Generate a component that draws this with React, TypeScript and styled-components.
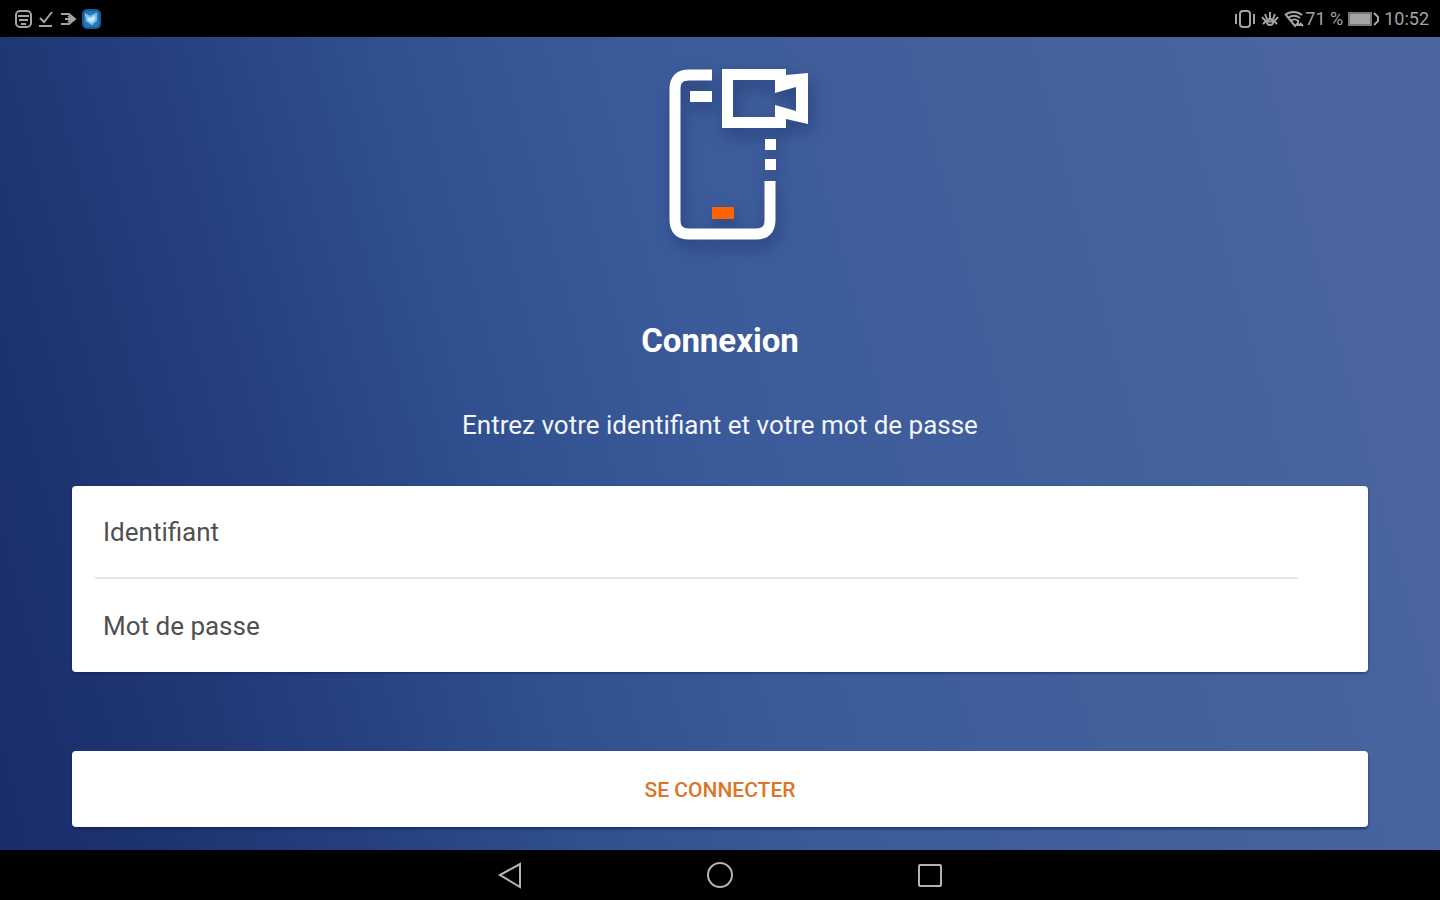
import React from 'react';
import styled, { createGlobalStyle } from 'styled-components';

const GlobalStyle = createGlobalStyle`
  *, *::before, *::after { box-sizing: border-box; }
  body { margin: 0; background: #000; font-family: Roboto, "Liberation Sans", sans-serif; }
`;

const Screen = styled.div`
  display: flex;
  flex-direction: column;
  min-height: 100vh;
`;

const StatusBar = styled.header`
  display: flex;
  justify-content: space-between;
  align-items: center;
  height: 37px;
  padding: 0 11px 0 14px;
  background: #000;
  color: #a4a4a4;
  font-size: 18px;
  line-height: 20px;
`;

const StatusGroup = styled.div<{ $gap: number }>`
  display: flex;
  align-items: center;
  gap: ${({ $gap }) => $gap}px;
`;

const StatusIcon = styled.svg`
  display: block;
  fill: none;
  stroke: #a4a4a4;
  stroke-width: 2;
`;

const Content = styled.main`
  display: flex;
  flex: 1;
  flex-direction: column;
  align-items: center;
  padding: 28px 5% 23px;
  background: linear-gradient(75deg, #192d69 0%, #1c316f 7%, #253e7d 21%, #2f4f8f 35%, #3a5a9a 50%, #405e9b 64%, #44629c 79%, #4b659f 93%);
`;

const Logo = styled.svg`
  display: block;
  overflow: visible;
  filter: drop-shadow(3px 8px 8px rgba(20, 40, 90, 0.45));
`;

const Title = styled.h1`
  margin: 80px 0 0;
  color: #fff;
  font-size: 33px;
  font-weight: 700;
  line-height: 40px;
`;

const Subtitle = styled.p`
  margin: 48px 0 0;
  color: #f2f5fb;
  font-size: 26px;
  line-height: 32px;
`;

const LoginForm = styled.form`
  display: flex;
  flex-direction: column;
  gap: 79px;
  width: 100%;
  margin-top: 45px;
`;

const Card = styled.div`
  padding: 0 70px 0 23px;
  border-radius: 4px;
  background: #fff;
  box-shadow: 0 1px 3px rgba(10, 30, 80, 0.6);
`;

const Field = styled.input`
  display: block;
  width: 100%;
  height: 93px;
  padding: 0 8px;
  border: 0;
  outline: 0;
  background: transparent;
  color: #484848;
  font-family: inherit;
  font-size: 26px;

  &:not(:last-child) { border-bottom: 2px solid #e6e6e8; }
  &::placeholder { color: #505050; opacity: 1; }
`;

const SubmitButton = styled.button`
  height: 76px;
  padding: 2px 0 0;
  border: 0;
  border-radius: 4px;
  background: #fff;
  box-shadow: 0 2px 3px rgba(10, 30, 80, 0.6);
  color: #de7426;
  font-family: inherit;
  font-size: 21px;
  font-weight: 500;
  line-height: 26px;
`;

const NavigationBar = styled.nav`
  display: flex;
  justify-content: center;
  align-items: center;
  gap: 170px;
  height: 50px;
  background: #000;
`;

const NavButton = styled.button`
  display: block;
  width: 40px;
  height: 40px;
  padding: 0;
  border: 0;
  background: transparent;
`;

const NavIcon = styled.svg`
  display: block;
  fill: none;
  stroke: #b4b4b4;
  stroke-width: 2;
`;

function Notifications() {
  return (
    <StatusGroup $gap={4}>
      <StatusIcon width="19" height="20" viewBox="0 0 19 20">
        <rect x="2" y="2" width="15" height="16" rx="4" />
        <path d="M4 7h11M5 11h9M7 15h5" />
      </StatusIcon>
      <StatusIcon width="18" height="20" viewBox="0 0 18 20">
        <path d="M3 9l4 4 8-10M2 17h13" />
      </StatusIcon>
      <StatusIcon width="19" height="20" viewBox="0 0 19 20">
        <path d="M2 5h8l6 5-6 5H2M6 10h8M9 7l4 3-4 3" />
      </StatusIcon>
      <StatusIcon width="19" height="20" viewBox="0 0 19 20">
        <rect x="1" y="1" width="17" height="18" rx="4" fill="#2476bd" stroke="#195997" />
        <path d="M4 6l4 2 6-3v6l-4 4-5-3z" fill="#c3e7f7" stroke="#78bfe5" />
      </StatusIcon>
    </StatusGroup>
  );
}

function DeviceStatus() {
  return (
    <StatusGroup $gap={4}>
      <StatusIcon width="22" height="20" viewBox="0 0 22 20">
        <rect x="6" y="2" width="10" height="16" rx="3" />
        <path d="M2 5v10M20 5v10" />
      </StatusIcon>
      <StatusIcon width="20" height="20" viewBox="0 0 20 20">
        <path d="M2 8c4 6 12 6 16 0M10 3v7M5 5l2 5M15 5l-2 5M3 15l3-3M17 15l-3-3" />
        <circle cx="10" cy="13" r="3" />
      </StatusIcon>
      <StatusGroup $gap={0}>
        <StatusIcon width="21" height="20" viewBox="0 0 21 20">
          <path d="M1 6c5-4 12-4 17 0M4 9c4-3 8-3 12 0M7 12c2-2 5-2 7 0M2 6l9 11 3-3M14 11v5h5M16 14l3 3" />
        </StatusIcon>
        <span>71 %</span>
      </StatusGroup>
      <StatusIcon width="33" height="20" viewBox="0 0 33 20">
        <rect x="2" y="4" width="22" height="12" fill="#a4a4a4" stroke="#777" />
        <path d="M27 4l4 4v4l-4 4" />
      </StatusIcon>
      <time>10:52</time>
    </StatusGroup>
  );
}

export default function App() {
  return (
    <>
      <GlobalStyle />
      <Screen>
        <StatusBar>
          <Notifications />
          <DeviceStatus />
        </StatusBar>
        <Content>
          <Logo width="102" height="176" viewBox="0 0 102 176" role="img" aria-label="Caméra">
            <path d="M43 10H20Q6 10 6 24V155Q6 169 20 169H87Q101 169 101 155V116" fill="none" stroke="#fff" strokeWidth="11" />
            <path d="M21 26h22v11H21zM96 74h11v11H96zM96 94h11v11H96z" fill="#fff" />
            <path fillRule="evenodd" fill="#fff" d="M53 4H117V10L139 8V59L117 54V63H53zM64 15V52H106V40L127 46V22L106 28V15z" />
            <path d="M43 142h22v12H43z" fill="#ff6200" />
          </Logo>
          <Title>Connexion</Title>
          <Subtitle>Entrez votre identifiant et votre mot de passe</Subtitle>
          <LoginForm onSubmit={(event) => event.preventDefault()}>
            <Card>
              <Field type="text" aria-label="Identifiant" placeholder="Identifiant" autoComplete="username" />
              <Field type="password" aria-label="Mot de passe" placeholder="Mot de passe" autoComplete="current-password" />
            </Card>
            <SubmitButton type="submit">SE CONNECTER</SubmitButton>
          </LoginForm>
        </Content>
        <NavigationBar aria-label="Navigation">
          <NavButton type="button" aria-label="Retour">
            <NavIcon width="40" height="40" viewBox="0 0 40 40"><path d="M10 20L30 9v23z" /></NavIcon>
          </NavButton>
          <NavButton type="button" aria-label="Accueil">
            <NavIcon width="40" height="40" viewBox="0 0 40 40"><circle cx="20" cy="20" r="12" /></NavIcon>
          </NavButton>
          <NavButton type="button" aria-label="Applications récentes">
            <NavIcon width="40" height="40" viewBox="0 0 40 40"><rect x="9" y="10" width="22" height="21" rx="1" /></NavIcon>
          </NavButton>
        </NavigationBar>
      </Screen>
    </>
  );
}
